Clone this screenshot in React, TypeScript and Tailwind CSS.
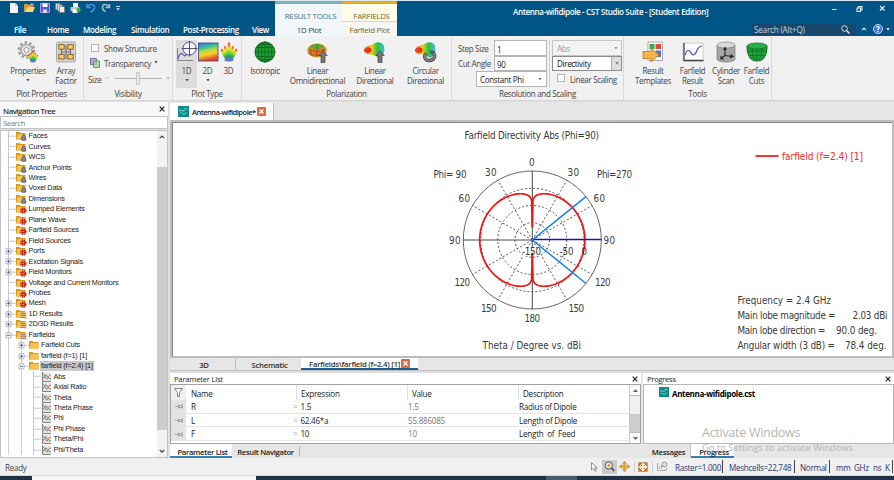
import React from "react";

type Kids = { children?: React.ReactNode };

/* ---------- small drawings ---------- */

const Svg = ({ s = "w-[22px] h-[22px]", box = "0 0 22 22", children }: Kids & { s?: string; box?: string }) => (
  <svg className={`${s} shrink-0 block`} viewBox={box} fill="none">
    {children}
  </svg>
);

const Rainbow = () => (
  <linearGradient id="rainbow" x1="0" y1="0" x2="0" y2="1">
    <stop offset="0" stopColor="#e0201c" />
    <stop offset="0.35" stopColor="#f3e51c" />
    <stop offset="0.65" stopColor="#3fd03a" />
    <stop offset="1" stopColor="#2a49d8" />
  </linearGradient>
);

const Petals = () => (
  <g fill="url(#rainbow)">
    <ellipse cx="3" cy="12" rx="1.700" ry="6" transform="rotate(-28 3 12)" />
    <ellipse cx="13" cy="12" rx="1.700" ry="6" transform="rotate(28 13 12)" />
    <ellipse cx="5.200" cy="10.500" rx="1.500" ry="7" transform="rotate(-12 5.2 10.5)" />
    <ellipse cx="10.800" cy="10.500" rx="1.500" ry="7" transform="rotate(12 10.8 10.5)" />
    <ellipse cx="8" cy="9" rx="1.900" ry="9" />
    <ellipse cx="8" cy="17.500" rx="4.500" ry="2" fill="#5b7fc0" />
  </g>
);

const PropertiesIcon = () => (
  <Svg>
    <defs><Rainbow /></defs>
    <circle cx="9.500" cy="9" r="7.600" stroke="#999" strokeWidth="2.200" strokeDasharray="2.600 2.200" />
    <circle cx="9.500" cy="9" r="5.600" fill="#e8e8e8" stroke="#a2a2a2" strokeWidth="1.500" />
    <circle cx="9.500" cy="9" r="2.600" fill="#f6f6f6" stroke="#999" />
    <g transform="translate(11 9.5) scale(.62)"><Petals /></g>
  </Svg>
);

const ArrayIcon = () => (
  <Svg>
    <rect x="1.500" y="1" width="19" height="20" rx="1.500" fill="#d4d4d4" stroke="#aaa" />
    <path d="M6.500 8v7M15.500 8v7M6.500 11h9M11 4v14" stroke="#666" strokeWidth="1" />
    <g fill="#ffc95c" stroke="#7c602a" strokeWidth=".9">
      <rect x="3.800" y="3.600" width="5.400" height="4.600" /><rect x="12.800" y="3.600" width="5.400" height="4.600" />
      <rect x="3.800" y="13.400" width="5.400" height="4.600" /><rect x="12.800" y="13.400" width="5.400" height="4.600" />
    </g>
  </Svg>
);

const OneDIcon = () => (
  <Svg>
    <path d="M1.500 7v12.500H17" stroke="#888" />
    <path d="M2 18c1-5 3-7 5-4.500s3 1 4-1.500 3-3 5-2" stroke="#5a59a8" strokeWidth="1.200" />
    <circle cx="13.500" cy="7.500" r="6.600" stroke="#555599" fill="#f4f4fb" strokeWidth="1" />
    <path d="M5.500 7.500h16M13.500 0v15.500" stroke="#555577" strokeWidth="1" />
  </Svg>
);

const TwoDIcon = () => (
  <Svg>
    <defs>
      <linearGradient id="map" x1="0" y1="0" x2=".25" y2="1">
        <stop offset="0" stopColor="#2a6be0" />
        <stop offset=".3" stopColor="#38bfa0" />
        <stop offset=".5" stopColor="#b8d840" />
        <stop offset=".7" stopColor="#f6d12a" />
        <stop offset="1" stopColor="#e8452a" />
      </linearGradient>
    </defs>
    <rect x="1.500" y="2" width="19.500" height="18" fill="url(#map)" stroke="#4a4f80" strokeWidth=".9" />
  </Svg>
);

const ThreeDIcon = () => <Svg><g transform="translate(3 1)"><Petals /></g></Svg>;

const GlobeIcon = () => (
  <Svg>
    <circle cx="11" cy="11" r="10" fill="#1f9d36" stroke="#0c6a1e" />
    <g stroke="#0b5f1b" strokeWidth=".7">
      <ellipse cx="11" cy="11" rx="3.500" ry="10" /><ellipse cx="11" cy="11" rx="7" ry="10" />
      <path d="M11 1v20M1 11h20M2.500 6.500h17M2.500 15.500h17M5 3.500h12M5 18.500h12" />
    </g>
  </Svg>
);

const ArrowUp = () => <path d="M16 10l4.200 4.500h-2.200v7h-4v-7h-2.200z" fill="#777" stroke="#444" strokeWidth=".7" />;

const DonutIcon = () => (
  <Svg>
    <ellipse cx="10" cy="9.500" rx="9.800" ry="7" fill="#e3942a" />
    <path d="M.3 9.500a9.800 7 0 0 1 19.400 0z" fill="#a4c834" />
    <ellipse cx="10" cy="10.500" rx="8.500" ry="4" fill="#e8702b" />
    <ellipse cx="10" cy="5.500" rx="6" ry="2.400" fill="#4fae3a" />
    <path d="M10 3v13M4 4.500q-2 5 1 10.500M16 4.500q2 5-1 10.500M1 8q9 5 18 0M1 12q9 5 18 0" stroke="#6b4a16" strokeWidth=".6" />
    <ArrowUp />
  </Svg>
);

const Lobe = () => (
  <>
    <defs>
      <linearGradient id="lobe"><stop offset="0" stopColor="#df211a" /><stop offset=".35" stopColor="#f6d51d" /><stop offset=".65" stopColor="#35bf3e" /><stop offset="1" stopColor="#42b9e0" /></linearGradient>
    </defs>
    <path d="M0 9C1 5 8 4 11 2c4-2 8 0 9 3 1 5 0 9-4 12-3-1-6-3-9-3.500C3 13 0 12 0 9z" fill="url(#lobe)" />
    <circle cx="5" cy="9" r="2.600" fill="#e8301c" />
  </>
);

const LinearIcon = () => <Svg><Lobe /><ArrowUp /></Svg>;
const CircularIcon = () => (
  <Svg>
    <Lobe />
    <path d="M11 12c-3 5 0 8 4 7.500S21.500 15 18 11" stroke="#444" strokeWidth="3.400" />
    <path d="M11 12c-3 5 0 8 4 7.500S21.500 15 18 11" stroke="#858585" strokeWidth="1.800" />
    <path d="M14.500 9.500l5.500.5-3.500 4z" fill="#555" />
  </Svg>
);

const TemplateIcon = () => (
  <Svg>
    <rect x="6" y="1" width="14.500" height="18.500" fill="#fff" stroke="#999" strokeWidth=".8" />
    <rect x="7.500" y="3" width="5" height="5" fill="#2fae4a" /><rect x="13.500" y="3" width="5.500" height="5" fill="#e4463a" />
    <rect x="13.500" y="9.500" width="5.500" height="6.500" fill="#4e73d8" />
    <path d="M1 10.500h8V7l8 7-8 7v-3.500H1z" fill="#f7b24a" stroke="#b87417" strokeWidth=".8" />
  </Svg>
);

const CurveIcon = () => (
  <Svg>
    <rect x="1" y="2" width="20" height="18" fill="#fafafa" stroke="#bbb" strokeWidth=".7" />
    <path d="M2 2v17.500h19.500" stroke="#444" strokeWidth="1.300" />
    <path d="M3 14c3-8 5-4 6.500-1.500s4 1 5-2S17 5.500 20 5" stroke="#4a49a8" strokeWidth="1.200" />
  </Svg>
);

const CylinderIcon = () => (
  <Svg>
    <path d="M2 4v14c0 4 18 4 18 0V4z" fill="#a6a6a6" stroke="#777" strokeWidth=".7" />
    <ellipse cx="11" cy="4" rx="9" ry="3" fill="#dadada" stroke="#888" strokeWidth=".7" />
    <path d="M10 7v7.500l-4 3M10 14.500l7 1M8.500 9L10 6.500 11.500 9M15.500 13.500l2.500 2-3 1.500M6 15v3h3" stroke="#222" strokeWidth="1.100" />
  </Svg>
);

const BowlIcon = () => (
  <Svg>
    <path d="M1 5c0 9 3 15 10 15S21 14 21 5z" fill="#1fa13a" stroke="#0d6b20" />
    <ellipse cx="11" cy="5" rx="10" ry="3" fill="#27b045" stroke="#0d6b20" strokeWidth=".7" />
    <path d="M2 10h18M3.500 14.500h15M6 7.500q0 8 3 12M11 8v12M16 7.500q0 8-3 12" stroke="#0d6b20" strokeWidth=".7" />
  </Svg>
);

const CstLogo = ({ s }: { s: string }) => (
  <Svg s={s} box="0 0 11 11">
    <path d="M0 0h11v11H0z" fill="#0c8d89" />
    <path d="M1.500 5.500q1-3 2.500-1t2.500-1 3 0M2.500 7.500q1-2 2 0t4-1" stroke="#a8e0dc" strokeWidth=".8" />
  </Svg>
);

const Caret = ({ c = "text-[#2a5c8a]" }: { c?: string }) => (
  <svg className={`w-[4px] h-[3px] shrink-0 ${c}`} viewBox="0 0 4 3"><path d="M.3 0h3.400L2 2.400z" fill="currentColor" /></svg>
);

const CloseX = () => (
  <svg className="w-[6px] h-[6px]" viewBox="0 0 6 6"><path d="M.7.7l4.600 4.600M5.300.7L.7 5.300" stroke="#222" strokeWidth="1.200" /></svg>
);

const CloseBadge = () => (
  <span className="flex w-[9px] h-[9px] shrink-0 items-center justify-center rounded-[1px] bg-[#e0694a]">
    <svg className="w-[5px] h-[5px]" viewBox="0 0 5 5"><path d="M.5.5l4 4M4.500.5l-4 4" stroke="#fff" strokeWidth="1.200" /></svg>
  </span>
);

/* ---------- title bar ---------- */

const QuickAccess = () => (
  <div className="flex h-[14px] items-center gap-[5px] pl-[9px]">
    <Svg s="w-[10px] h-[10px]" box="0 0 10 10"><path d="M1 0h5.500L9 2.500V10H1z" fill="#f4f4f4" /><path d="M6.500 0v2.500H9" stroke="#999" strokeWidth=".6" /></Svg>
    <Svg s="w-[11px] h-[10px]" box="0 0 11 10"><path d="M0 1h4l1 1h4v2H3L1 9H0z" fill="#d99a2b" /><path d="M3 4h8L9 9H1z" fill="#fcd277" /><path d="M6 1.500q3-2 4 1" stroke="#ddd" /></Svg>
    <Svg s="w-[10px] h-[10px]" box="0 0 10 10"><path d="M.5.5h9v9h-9z" fill="#5a58c4" stroke="#9c9be6" /><path d="M2.500.5h5V4h-5z" fill="#fff" /><path d="M3 6.500h4V10H3z" fill="#d8d8f0" /></Svg>
    <Svg s="w-[10px] h-[10px]" box="0 0 10 10"><path d="M.5.5h5v6h-5z" fill="#ddd" stroke="#777" strokeWidth=".7" /><path d="M2.500 2h5v6h-5z" fill="#ddd" stroke="#777" strokeWidth=".7" /><path d="M4.500 3.500h5v6h-5z" fill="#eee" stroke="#777" strokeWidth=".7" /></Svg>
    <Svg s="w-[11px] h-[10px]" box="0 0 11 10"><path d="M3 0h5v4H3z" fill="#fff" /><path d="M.5 4h9v4h-9z" fill="#c9c9c9" /><path d="M2.500 6.500h5V10h-5z" fill="#fff" /><circle cx="8.500" cy="7" r="2.200" fill="#38b048" /></Svg>
    <Svg s="w-[10px] h-[10px]" box="0 0 10 10"><path d="M1 1v3.500h4M1.500 4C3 1 8 .5 8.500 4c.3 2-1.500 4-4 5" stroke="#4f8fdc" strokeWidth="1.500" /></Svg>
    <Svg s="w-[10px] h-[10px]" box="0 0 10 10"><path d="M8.500 1v3.500h-4M8 4C6.500 1 2 .5 1.500 4c-.3 2 1 3.500 3 4.500" stroke="#aab9c4" strokeWidth="1.500" /></Svg>
    <Svg s="w-[4px] h-[5px]" box="0 0 4 5"><path d="M0 .5h4" stroke="#cfe0ea" /><path d="M0 2.300h4L2 4.500z" fill="#cfe0ea" /></Svg>
  </div>
);

const MenuTab = ({ w, children }: Kids & { w: string }) => (
  <span className={`${w} shrink-0 whitespace-nowrap`}>{children}</span>
);

const Header = () => (
  <header className="flex h-[36px] shrink-0 border-t border-[#dce8ef] bg-[#005587] text-white">
    <div className="w-[275px] shrink-0">
      <QuickAccess />
      <nav className="flex h-[21px] items-center pl-[14px] pt-[9px] text-[8px] leading-[12px] font-semibold tracking-[-0.330px]">
        <MenuTab w="w-[33px]">File</MenuTab>
        <MenuTab w="w-[36px]">Home</MenuTab>
        <MenuTab w="w-[48px]">Modeling</MenuTab>
        <MenuTab w="w-[52px]">Simulation</MenuTab>
        <MenuTab w="w-[69px]">Post-Processing</MenuTab>
        <MenuTab w="w-[20px]">View</MenuTab>
      </nav>
    </div>
    <div className="flex w-[67px] shrink-0 flex-col items-center border-t-[3px] border-[#7db0b9] bg-[#f1f7fb] pl-[4px] text-[8px] leading-[15px] tracking-[-0.340px]">
      <span className="h-[17px] whitespace-nowrap pt-[4px] text-[#4b727e]">RESULT TOOLS</span>
      <span className="pt-px pr-[3px] text-[#3f4650]">1D Plot</span>
    </div>
    <div className="flex w-[55px] shrink-0 flex-col items-center border-t-[3px] border-[#e5a91c] bg-[#fffbe9] text-[8px] leading-[15px] tracking-[-0.330px] text-[#7e6528]">
      <span className="h-[17px] pl-[4px] pt-[4px]">FARFIELDS</span>
      <span className="w-full grow border-t border-[#e6d9a8] bg-[#f7f6f2] text-center leading-[16px]">Farfield Plot</span>
    </div>
    <div className="flex min-w-0 grow flex-col">
      <div className="flex h-[21px] items-center pl-[116px]">
        <span className="w-[203px] whitespace-nowrap text-[8px] font-semibold tracking-[-0.330px]">Antenna-wifidipole - CST Studio Suite - [Student Edition]</span>
        <svg className="mb-[6px] ml-[116px] h-[8px] w-[54px]" viewBox="0 0 54 8" fill="none" stroke="#e5eef4">
          <path d="M0 4.500h4.500M25 3h3.500v3.500H25zM26.500 3V1.500H30V5h-1.500M48 1l4.500 4.500M52.500 1L48 5.500" strokeWidth="1.100" />
        </svg>
      </div>
      <div className="flex h-[14px] items-center justify-end">
        <div className="flex h-[11px] w-[104px] items-center justify-between bg-[#17476a] pl-[2px] pr-[6px]">
          <span className="pt-[2px] text-[8.100px] leading-[10px] tracking-[-0.190px] text-[#c4d5e0]">Search (Alt+Q)</span>
          <svg className="h-[9px] w-[9px]" viewBox="0 0 9 9" fill="none" stroke="#d4e1ea"><circle cx="3.500" cy="3.500" r="2.800" /><path d="M5.500 5.500l3 3" strokeWidth="1.500" /></svg>
        </div>
        <svg className="ml-[5px] h-[4px] w-[6px]" viewBox="0 0 6 4"><path d="M1 3.200l2-2 2 2" stroke="#fff" strokeWidth="1.200" fill="none" /></svg>
        <span className="ml-[6px] flex h-[10px] w-[10px] items-center justify-center rounded-full border border-[#c6d8f5] bg-[#3f74cf] text-[8px] leading-none font-bold">?</span>
        <span className="ml-[3px] mr-[4px]"><Caret c="text-white" /></span>
      </div>
    </div>
  </header>
);

/* ---------- ribbon ---------- */

const Group = ({ w, label, children }: Kids & { w: string; label?: string }) => (
  <section className={`${w} flex shrink-0 flex-col border-r border-[#d9d9d9] pt-[3px]`}>
    <div className="flex h-[48px]">{children}</div>
    <div className="text-center leading-[12px]">{label}</div>
  </section>
);

const Tool = ({ w, icon, a, b, drop, on }: { w: string; icon: React.ReactNode; a: string; b?: string; drop?: boolean; on?: boolean }) => (
  <div className={`${w} flex shrink-0 flex-col items-center whitespace-nowrap leading-[10px] ${on ? "bg-[#dcdcdc]" : ""}`}>
    <div className="h-[26px] pt-px">{icon}</div>
    <span>{a}</span>
    {b && <span>{b}</span>}
    {drop && <span className="flex h-[8px] items-center"><Caret /></span>}
  </div>
);

const Ribbon = () => (
  <div className="flex h-[65px] shrink-0 border-b border-[#d4d4d4] bg-[#f1f1f1] pt-px text-[8.050px] tracking-[-0.340px] text-[#444]">
    <Group w="w-[84px]" label="Plot Properties">
      <Tool w="w-[46px] ml-[5px]" icon={<PropertiesIcon />} a="Properties" drop />
      <Tool w="w-[30px]" icon={<ArrayIcon />} a="Array" b="Factor" />
    </Group>
    <Group w="w-[89px]" label="Visibility">
      <div className="flex flex-col pl-[4px] pt-px">
        <div className="flex h-[15px] items-center leading-[10px]"><span className="ml-[3px] mr-[5px] mb-[2px] h-[8px] w-[8px] border border-[#b4b4b4] bg-white" />Show Structure</div>
        <div className="flex h-[16px] items-center leading-[10px]">
          <Svg s="w-[10px] h-[10px] ml-[2px] mr-[4px] mb-[2px]" box="0 0 10 10"><path d="M.5.5h6v6h-6z" fill="#b6a9d8" stroke="#7669a6" /><path d="M3.500 3h6v6.500h-6z" fill="#9fd39a" stroke="#5ca659" fillOpacity=".8" /></Svg>
          Transparency<span className="ml-[3px] pb-[4px]"><Caret /></span>
        </div>
        <div className="flex h-[16px] items-center leading-[10px]">
          Size
          <svg className="mb-[3px] ml-[3px] h-[13px] w-[67px]" viewBox="0 0 67 13"><path d="M1 6h4M62 6h4M64 4v4" stroke="#c4c4c4" /><path d="M10 6.500h48" stroke="#b5b5b5" /><path d="M32.500.5h3v12h-3z" fill="#e9e9e9" stroke="#bcbcbc" strokeWidth=".8" /></svg>
        </div>
      </div>
    </Group>
    <Group w="w-[69px]" label="Plot Type">
      <Tool w="w-[21px] ml-[3px]" icon={<OneDIcon />} a="1D" drop on />
      <Tool w="w-[21px]" icon={<TwoDIcon />} a="2D" drop />
      <Tool w="w-[21px]" icon={<ThreeDIcon />} a="3D" />
    </Group>
    <Group w="w-[210px]" label="Polarization">
      <Tool w="w-[44px] ml-[1px]" icon={<GlobeIcon />} a="Isotropic" />
      <Tool w="w-[61px]" icon={<DonutIcon />} a="Linear" b="Omnidirectional" />
      <Tool w="w-[54px]" icon={<LinearIcon />} a="Linear" b="Directional" />
      <Tool w="w-[47px]" icon={<CircularIcon />} a="Circular" b="Directional" />
    </Group>
    <Group w="w-[172px]" label="Resolution and Scaling">
      <div className="flex w-[98px] shrink-0 flex-col border-r border-[#cfcfcf] pl-[6px] pr-[2px]">
        <div className="flex h-[16px] items-center justify-between"><span className="pt-[2px]">Step Size</span><span className="h-[16px] w-[53px] border border-[#b5b5b5] bg-white pl-[2px] leading-[17px] text-[#222]">1</span></div>
        <div className="flex h-[15px] items-center justify-between"><span className="pt-[2px]">Cut Angle</span><span className="h-[15px] w-[53px] border border-[#b5b5b5] bg-white pl-[2px] leading-[15px] text-[#222]">90</span></div>
        <div className="ml-auto flex h-[16px] w-[71px] items-center justify-between border border-[#b5b5b5] bg-white pl-[3px] pr-[4px] text-[#222]"><span className="pt-[2px]">Constant Phi</span><Caret c="text-[#777]" /></div>
      </div>
      <div className="flex w-[72px] flex-col pl-[2px]">
        <div className="flex h-[16px] items-center justify-between border border-[#c5c5c5] bg-[#f3f3f3] pl-[4px] pr-[3px] text-[#999]"><span className="pt-[2px]">Abs</span><Caret c="text-[#999]" /></div>
        <div className="flex h-[15px] items-center justify-between border border-[#8d8d8d] bg-white pl-[4px] text-[#111]"><span className="pt-px">Directivity</span><span className="flex h-full w-[10px] items-center justify-center border-l border-[#aaa] bg-[#ddd]"><Caret c="text-[#777]" /></span></div>
        <div className="flex h-[17px] items-center whitespace-nowrap"><span className="mb-[3px] ml-[5px] mr-[5px] h-[8px] w-[8px] border border-[#b4b4b4] bg-white" /><span className="pt-[2px]">Linear Scaling</span></div>
      </div>
    </Group>
    <Group w="w-[148px]" label="Tools">
      <Tool w="w-[46px] ml-[6px]" icon={<TemplateIcon />} a="Result" b="Templates" />
      <Tool w="w-[33px]" icon={<CurveIcon />} a="Farfield" b="Result" />
      <Tool w="w-[34px]" icon={<CylinderIcon />} a="Cylinder" b="Scan" />
      <Tool w="w-[27px]" icon={<BowlIcon />} a="Farfield" b="Cuts" />
    </Group>
  </div>
);

/* ---------- navigation tree ---------- */

type Kind = "cone" | "gear" | "wave" | "plain" | "plot";
type Row = { t: string; k: Kind; lvl: number; box?: "+" | "-"; sel?: boolean };

const rows: Row[] = [
  ...["Faces", "Curves", "WCS", "Anchor Points", "Wires", "Voxel Data", "Dimensions"].map((t): Row => ({ t, k: "cone", lvl: 0 })),
  ...["Lumped Elements", "Plane Wave", "Farfield Sources", "Field Sources"].map((t): Row => ({ t, k: "gear", lvl: 0 })),
  ...["Ports", "Excitation Signals", "Field Monitors"].map((t): Row => ({ t, k: "gear", lvl: 0, box: "+" })),
  { t: "Voltage and Current Monitors", k: "gear", lvl: 0 },
  { t: "Probes", k: "gear", lvl: 0 },
  { t: "Mesh", k: "gear", lvl: 0, box: "+" },
  { t: "1D Results", k: "wave", lvl: 0, box: "+" },
  { t: "2D/3D Results", k: "wave", lvl: 0, box: "+" },
  { t: "Farfields", k: "wave", lvl: 0, box: "-" },
  { t: "Farfield Cuts", k: "plain", lvl: 1, box: "+" },
  { t: "farfield (f=1) [1]", k: "plain", lvl: 1, box: "+" },
  { t: "farfield (f=2.4) [1]", k: "plain", lvl: 1, box: "-", sel: true },
  ...["Abs", "Axial Ratio", "Theta", "Theta Phase", "Phi", "Phi Phase", "Theta/Phi", "Phi/Theta"].map((t): Row => ({ t, k: "plot", lvl: 2 })),
];

const NodeIcon = ({ k }: { k: Kind }) => (
  <Svg s="w-[11px] h-[10px]" box="0 0 11 10">
    {k === "plot" ? (
      <>
        <path d="M1 .5h9v9H1z" fill="#e3e3e3" />
        <path d="M1.500 0v9.500H10" stroke="#777" strokeWidth=".9" />
        <path d="M2 2.500c2-1 2.500 5 4 4.500S7.500 2 10 3.500" stroke="#d44" strokeWidth=".9" />
        <path d="M2 6c1.500 1 1.500-3.500 3-3S7.500 8 10 6.500" stroke="#2a9a4a" strokeWidth=".9" />
      </>
    ) : (
      <>
        <path d="M0 1h3.500l1 1H9.500v6.500H0z" fill="#d9981a" />
        <path d="M1.500 3h8v5.500h-9z" fill="#f5c350" />
        {k === "cone" && <path d="M7.600 3.500c1 0 1.500 2 2.600 5-1 1.300-4 1.300-5 0 1-3 1.400-5 2.400-5z" fill="#85858c" stroke="#44444c" strokeWidth=".6" />}
        {k === "gear" && (<><circle cx="7.300" cy="6.600" r="2.500" stroke="#b51a12" strokeWidth="1.500" strokeDasharray="1.300 .7" /><circle cx="7.300" cy="6.600" r="1.900" fill="#d3271b" /><circle cx="7.300" cy="6.600" r=".7" fill="#f6c0a0" /></>)}
        {k === "wave" && <path d="M4.500 4.500c2-1.500 3 1 6 0M4.500 6.500c2-1.500 3 1 6 0M4.500 8.700c2-1.500 3 1 6 0" stroke="#6f6a9c" strokeWidth=".8" />}
      </>
    )}
  </Svg>
);

const Expander = ({ box }: { box?: "+" | "-" }) => (
  <svg className="h-full w-[15px] shrink-0" viewBox="0 0 15 10.467" preserveAspectRatio="none">
    <path d="M7.500 5.200H15M7.500 0v10.500" stroke="#c2c2c2" strokeWidth=".9" />
    {box && (
      <>
        <path d="M5 2.800h5v5H5z" fill="#fff" stroke="#a3a3a3" strokeWidth=".8" />
        <path d={box === "+" ? "M6 5.300h3M7.500 3.800v3" : "M6 5.300h3"} stroke="#3b57a5" strokeWidth=".9" />
      </>
    )}
  </svg>
);

const Rail = () => (
  <span className="flex h-full w-[12.500px] shrink-0"><span className="ml-[7px] h-full w-px bg-[#d2d2d2]" /></span>
);

const Tree = () => (
  <div className="flex min-h-0 grow border border-[#c4c4c4] bg-white">
    <div className="flex w-[156px] flex-col text-[7.300px] tracking-[-0.180px] text-[#222] font-['Liberation_Sans',Arial,sans-serif]">
      {rows.map((r) => (
        <div key={r.t} className="flex h-[10.467px] shrink-0 items-center whitespace-nowrap">
          {r.lvl > 0 && <Rail />}
          {r.lvl > 1 && <Rail />}
          <Expander box={r.box} />
          <NodeIcon k={r.k} />
          <span className={`ml-[0.500px] px-px leading-[10px] ${r.sel ? "bg-[#c9c9c9]" : ""}`}>{r.t}</span>
        </div>
      ))}
    </div>
    <div className="flex w-[10px] flex-col items-center justify-between bg-[#f2f2f2]">
      <svg className="h-[12px] w-[6px]" viewBox="0 0 6 12"><path d="M.8 7.200L3 5l2.200 2.200" stroke="#444" strokeWidth="1.200" fill="none" /></svg>
      <div className="mb-[15px] mt-[24px] w-full grow bg-[#cdcdcd]" />
      <svg className="h-[12px] w-[6px]" viewBox="0 0 6 12"><path d="M.8 5L3 7.200 5.200 5" stroke="#444" strokeWidth="1.200" fill="none" /></svg>
    </div>
  </div>
);

const NavPanel = () => (
  <aside className="flex w-[168px] shrink-0 flex-col text-[8px] tracking-[-0.350px]">
    <div className="flex h-[14px] shrink-0 items-center justify-between bg-[#f8f8f8] pl-[3px] pr-[3px]">
      <span className="pt-[3px] text-[7.800px] font-semibold leading-[10px] tracking-[-0.480px] text-[#333]">Navigation Tree</span><CloseX />
    </div>
    <div className="mb-[1px] flex h-[13px] shrink-0 items-center border border-[#c4c4c4] bg-white pl-[2px] text-[7.600px] text-[#777]">
      <span className="pt-px leading-[10px]">Search</span>
    </div>
    <Tree />
  </aside>
);

/* ---------- polar plot ---------- */

const CX = 532.3;
const CY = 240;

/** Half-wave dipole cut on a dB-scaled radius, swept from pole to pole. */
const lobe = (side: 1 | -1) => {
  const pts: string[] = [`${CX},${CY - 12.8}`];
  for (let d = 1; d < 180; d += 1) {
    const a = (d * Math.PI) / 180;
    const f = Math.abs(Math.cos((Math.PI / 2) * Math.cos(a)) / Math.sin(a));
    const r = 52.6 + 0.345 * 20 * Math.log10(f);
    pts.push(`${(CX + side * r * Math.sin(a)).toFixed(2)},${(CY - r * Math.cos(a)).toFixed(2)}`);
  }
  pts.push(`${CX},${CY + 12.8}`);
  return pts.join(" ");
};

const spokes = [30, 60, 120, 150, 210, 240, 300, 330].map((d) => (d * Math.PI) / 180);

const labels: [string, number, number, number][] = [
  ["Farfield Directivity Abs (Phi=90)", 464.5, 139, 134.5],
  ["0", 529, 166, 6],
  ["30", 485, 175.5, 11.5], ["30", 567.5, 175.5, 11.5],
  ["60", 458.5, 202, 11.5], ["60", 593.5, 202, 11.5],
  ["90", 449, 244, 11.5], ["90", 603.5, 244, 11.5],
  ["120", 454.5, 286, 15.5], ["120", 595, 286, 15.5],
  ["150", 481, 312, 15.5], ["150", 568.5, 312, 15.5],
  ["180", 524.5, 322, 15.5],
  ["-150", 522, 255, 19], ["-50", 559.5, 255, 14], ["0", 581.5, 255, 5.5],
  ["Phi= 90", 433.5, 178, 33], ["Phi=270", 597, 178, 35],
  ["Theta / Degree vs. dBi", 482.5, 348.5, 98.5],
  ["Frequency = 2.4 GHz", 737.5, 304, 93.5],
  ["Main lobe magnitude =", 737.5, 319, 98], ["2.03 dBi", 852.5, 319, 35],
  ["Main lobe direction =", 737.5, 333.5, 88], ["90.0 deg.", 836, 333.5, 41],
  ["Angular width (3 dB) =", 737.5, 348.5, 97.5], ["78.4 deg.", 845, 348.5, 41.5],
];

const Plot = () => (
  <svg className="block h-full w-full font-['DejaVu_Sans_Condensed','DejaVu_Sans',sans-serif] text-[9.800px]" viewBox="173 123 719 233" fill="none">
    <g stroke="#555" strokeWidth=".9">
      <circle cx={CX} cy={CY} r="69" />
      <path d={`M${CX - 69} ${CY}H${CX}M${CX} ${CY - 69}V${CY + 69}`} stroke="#333" />
      <g strokeDasharray="2 2" stroke="#444">
        <circle cx={CX} cy={CY} r="17.3" /><circle cx={CX} cy={CY} r="34.5" /><circle cx={CX} cy={CY} r="51.7" />
        {spokes.map((a) => (
          <line key={a} x1={CX} y1={CY} x2={CX + 69 * Math.sin(a)} y2={CY - 69 * Math.cos(a)} />
        ))}
      </g>
    </g>
    <path d="M523 248h18v8h-18z" fill="#fff" />
    <g stroke="#f51212" strokeWidth="1.700" strokeLinejoin="round">
      <polyline points={lobe(1)} /><polyline points={lobe(-1)} />
      <path d="M755.500 156h23" />
    </g>
    <path d={`M${CX} ${CY - 0.5}H601.5`} stroke="#1414b8" strokeWidth="1.300" />
    <path d={`M586 196.700L${CX} ${CY}L586 283.500`} stroke="#1480f0" strokeWidth="1.500" />
    <g fill="#3a3a3a">
      {labels.map(([t, x, y, w]) => (
        <text key={`${t}${x}`} x={x} y={y} textLength={w}>{t}</text>
      ))}
    </g>
    <text x="782" y="160" textLength="81" fill="#fb2626" className="text-[10px]">farfield (f=2.4) [1]</text>
  </svg>
);

/* ---------- document area ---------- */

const params = [
  ["R", "1.5", "1.5", "Radius of Dipole"],
  ["L", "62.46*a", "55.886085", "Length of Dipole"],
  ["F", "10", "10", "Length  of  Feed"],
];

const ParameterPanel = () => (
  <section className="flex w-[471px] shrink-0 flex-col">
    <div className="flex h-[11px] items-center justify-between bg-white pl-[4px] pr-[3px]"><span className="pt-px leading-[9px] font-medium tracking-[-0.250px]">Parameter List</span><CloseX /></div>
    <div className="flex h-[60px] border border-[#a2a2a6] bg-white">
      <div className="flex w-[458px] flex-col text-[8.100px] tracking-[-0.250px]">
        <div className="flex h-[15px] items-stretch leading-[18px]">
          <span className="flex w-[15px] items-center justify-center bg-[#f0f0f0]"><svg className="h-[9px] w-[9px]" viewBox="0 0 9 9"><path d="M.5.5h8L5.500 4.500V8.500h-2v-4z" fill="#fff" stroke="#777" strokeWidth=".9" /></svg></span>
          <span className="w-[111px] border-r border-[#e0e0e0] pl-[5px]">Name</span>
          <span className="w-[111px] border-r border-[#e0e0e0] pl-[4px]">Expression</span>
          <span className="w-[111px] border-r border-[#e0e0e0] pl-[4px]">Value</span>
          <span className="pl-[4px]">Description</span>
        </div>
        {params.map(([n, e, v, d]) => (
          <div key={n} className="flex h-[13.700px] shrink-0 items-stretch leading-[13px]">
            <span className="flex w-[15px] items-center justify-center bg-[#e3e3e3]"><svg className="h-[5px] w-[8px]" viewBox="0 0 8 5"><path d="M0 2.500h3M3.500.5v4M4 1.500h3v2H4zM7.500.5v4" stroke="#999" strokeWidth=".8" fill="none" /></svg></span>
            <span className="flex grow border-b border-[#e4e4e4] whitespace-pre">
              <span className="w-[107px] pl-[5px]">{n}</span>
              <span className="w-[115px] whitespace-pre"><span className="mr-[3px] text-[#aaa]">=</span>{e}</span>
              <span className="w-[111px] text-[#777]">{v}</span>
              <span>{d}</span>
            </span>
          </div>
        ))}
      </div>
      <div className="flex w-[11px] flex-col border-l border-[#c8c8c8] bg-[#f0f0f0]">
        <span className="flex h-[11px] items-center justify-center border-b border-[#bbb] bg-[#fafafa]"><svg className="h-[3px] w-[5px]" viewBox="0 0 5 3"><path d="M0 3h5L2.500 0z" fill="#666" /></svg></span>
        <span className="mt-[18px] grow bg-[#cdcdcd]" />
        <span className="flex h-[11px] items-center justify-center border-t border-[#bbb] bg-[#fafafa]"><svg className="h-[3px] w-[5px]" viewBox="0 0 5 3"><path d="M0 0h5L2.500 3z" fill="#666" /></svg></span>
      </div>
    </div>
    <div className="flex h-[14px] items-stretch bg-[#e6e6e6] text-[7.700px] font-semibold leading-[16px]">
      <span className="w-[62px] border-b-2 border-[#2f80ac] bg-white pl-[3px] text-center">Parameter List</span>
      <span className="my-[2px] w-[68px] border-r border-[#b5b5b5] text-center leading-[12px]">Result Navigator</span>
    </div>
  </section>
);

const ProgressPanel = () => (
  <section className="relative flex min-w-0 grow flex-col">
    <div className="flex h-[11px] items-center justify-between bg-white pl-[4px] pr-[3px]"><span className="pt-px leading-[9px] font-medium">Progress</span><CloseX /></div>
    <div className="h-[60px] border border-[#b9b9b9] bg-white pl-[15px] pt-[2px]">
      <div className="flex items-start gap-[3px] text-[8px] font-bold tracking-[-0.340px] text-black"><CstLogo s="w-[10px] h-[10px]" /><span className="pt-[2px] leading-[10px]">Antenna-wifidipole.cst</span></div>
    </div>
    <div className="flex h-[14px] items-stretch bg-[#e6e6e6] text-[7.700px] font-semibold leading-[16px]">
      <span className="w-[48px] border-r border-[#c4c4c4] pl-[4px] text-center">Messages</span>
      <span className="w-[43px] border-b-2 border-[#2f80ac] bg-white pl-[3px] text-center">Progress</span>
    </div>
    <div className="absolute left-[59px] top-[52px] whitespace-nowrap text-[#b5b5b5]">
      <div className="text-[12.600px] leading-[16px]">Activate Windows</div>
      <div className="text-[9.300px] leading-[14px] tracking-[0.030px]">Go to Settings to activate Windows.</div>
    </div>
  </section>
);

const Workspace = () => (
  <main className="flex min-w-0 grow flex-col">
    <div className="flex h-[18px] shrink-0 items-end bg-[#e6e6e6]">
      <div className="flex h-[17px] w-[104px] items-center border-r border-[#bbb] bg-white pl-[8px] text-[#222]">
        <CstLogo s="w-[11px] h-[11px]" /><span className="ml-[3px] w-[65px] shrink-0 whitespace-nowrap pt-[2px] text-[7.500px] font-semibold tracking-[-0.480px]">Antenna-wifidipole*</span><CloseBadge />
      </div>
    </div>
    <div className="h-[238px] shrink-0 border-2 border-[#bdbdbd]">
      <div className="h-full border-l border-t border-[#858585] bg-white"><Plot /></div>
    </div>
    <div className="flex h-[12px] shrink-0 items-stretch bg-[#e6e6e6] text-[7.800px] leading-[14px] tracking-[-0.290px] font-semibold text-[#333]">
      <span className="w-[66px] border-r border-[#bbb] pl-[3px] text-center">3D</span>
      <span className="w-[65px] pl-[2px] text-center">Schematic</span>
      <span className="flex w-[117px] items-center justify-center gap-px whitespace-nowrap border-b-2 border-[#1d5e93] bg-white"><span className="pt-[2px]">Farfields\farfield (f=2.4) [1]</span><CloseBadge /></span>
    </div>
    <div className="h-[3px] shrink-0 border-t border-[#c2c2c2] bg-[#dcdcdc]" />
    <div className="flex h-[85px] shrink-0 gap-[2px] bg-[#e6e6e6] text-[7.700px] tracking-[-0.320px] text-[#222]">
      <ParameterPanel />
      <ProgressPanel />
    </div>
  </main>
);

/* ---------- status bar ---------- */

const Stat = ({ w, bar, children }: Kids & { w: string; bar?: boolean }) => (
  <span className={`${w} h-[13px] shrink-0 whitespace-nowrap leading-[16px] ${bar ? "border-r border-[#444]" : ""}`}>{children}</span>
);

const StatusBar = () => (
  <footer className="flex h-[17px] shrink-0 items-center bg-[#f0f0f0] text-[8.100px] tracking-[-0.280px]">
    <span className="w-[589px] pl-[5px] pt-[3px] text-[#444]">Ready</span>
    <Svg s="w-[10px] h-[12px]" box="0 0 10 12"><path d="M2.500 1.500v7.500l2-1.800 1.500 3 1.200-.6-1.400-2.800h2.500z" fill="#fff" stroke="#777" strokeWidth=".8" /></Svg>
    <span className="ml-[3px] flex h-[14px] w-[15px] items-center justify-center bg-[#cacaca]">
      <Svg s="w-[11px] h-[11px]" box="0 0 11 11"><circle cx="4.800" cy="4.500" r="3.600" fill="#eee" stroke="#555" /><path d="M3 4.500h3.600M4.800 2.700v3.600" stroke="#e58a1f" strokeWidth="1.200" /><path d="M7.500 7l2.800 3" stroke="#444" strokeWidth="1.600" /></Svg>
    </span>
    <Svg s="w-[11px] h-[11px] ml-[2px]" box="0 0 11 11"><path d="M5.500 0l2 2.500H6.300v2.200h2.200V3.500l2.500 2-2.500 2V6.300H6.300v2.200h1.200l-2 2.500-2-2.500h1.200V6.300H2.500v1.200L0 5.500l2.500-2v1.200h2.200V2.500H3.500z" fill="#efa034" stroke="#b87418" strokeWidth=".4" /></Svg>
    <span className="ml-[4px] h-[12px] w-px bg-[#cfcfcf]" />
    <Svg s="w-[10px] h-[10px] ml-[3px]" box="0 0 10 10"><path d="M.5.5h9v9h-9z" fill="#fdeede" stroke="#b58858" strokeWidth=".8" /><path d="M1.500 4V1.500H4M6 1.500h2.500V4M1.500 6v2.500H4M6 8.500h2.500V6M2 2l2 2M8 2L6 4M2 8l2-2M8 8L6 6" stroke="#d66a1a" strokeWidth="1" /></Svg>
    <span className="ml-[4px] h-[12px] w-px bg-[#cfcfcf]" />
    <Svg s="w-[11px] h-[11px] ml-[4px] mr-[7px]" box="0 0 11 11"><path d="M.5 2v7.500h9V7M2.500 8V5M4.500 8V4" stroke="#aaa" /><circle cx="7.500" cy="3.500" r="2.500" fill="#ddd" stroke="#999" /></Svg>
    <span className="flex text-[#28366e]">
      <Stat w="w-[48px]" bar>Raster=1.000</Stat>
      <Stat w="ml-[6px] w-[66px]" bar>Meshcells=22,748</Stat>
      <Stat w="ml-[5px] w-[30px]" bar>Normal</Stat>
      <Stat w="ml-[6px] w-[18px]">mm</Stat>
      <Stat w="w-[19px]">GHz</Stat>
      <Stat w="w-[12px]">ns</Stat>
      <Stat w="w-[8px]" bar>K</Stat>
    </span>
  </footer>
);

export default function App() {
  return (
    <div className="flex h-[480px] w-[894px] flex-col overflow-hidden bg-[#f0f0f0] font-['Open_Sans','Noto_Sans',sans-serif]">
      <Header />
      <Ribbon />
      <div className="flex h-[357px] shrink-0 gap-[2px] bg-[#e0e0e0] pt-px">
        <NavPanel />
        <Workspace />
      </div>
      <StatusBar />
      <div className="flex h-[5px] border-t border-[#d8d8d8] bg-[#1f3142]">
        <span className="w-[32px]" /><span className="w-[224px] bg-[#f5f5f5]" /><span className="ml-[290px] w-[31px] bg-[#4a5b6c]" />
      </div>
    </div>
  );
}
